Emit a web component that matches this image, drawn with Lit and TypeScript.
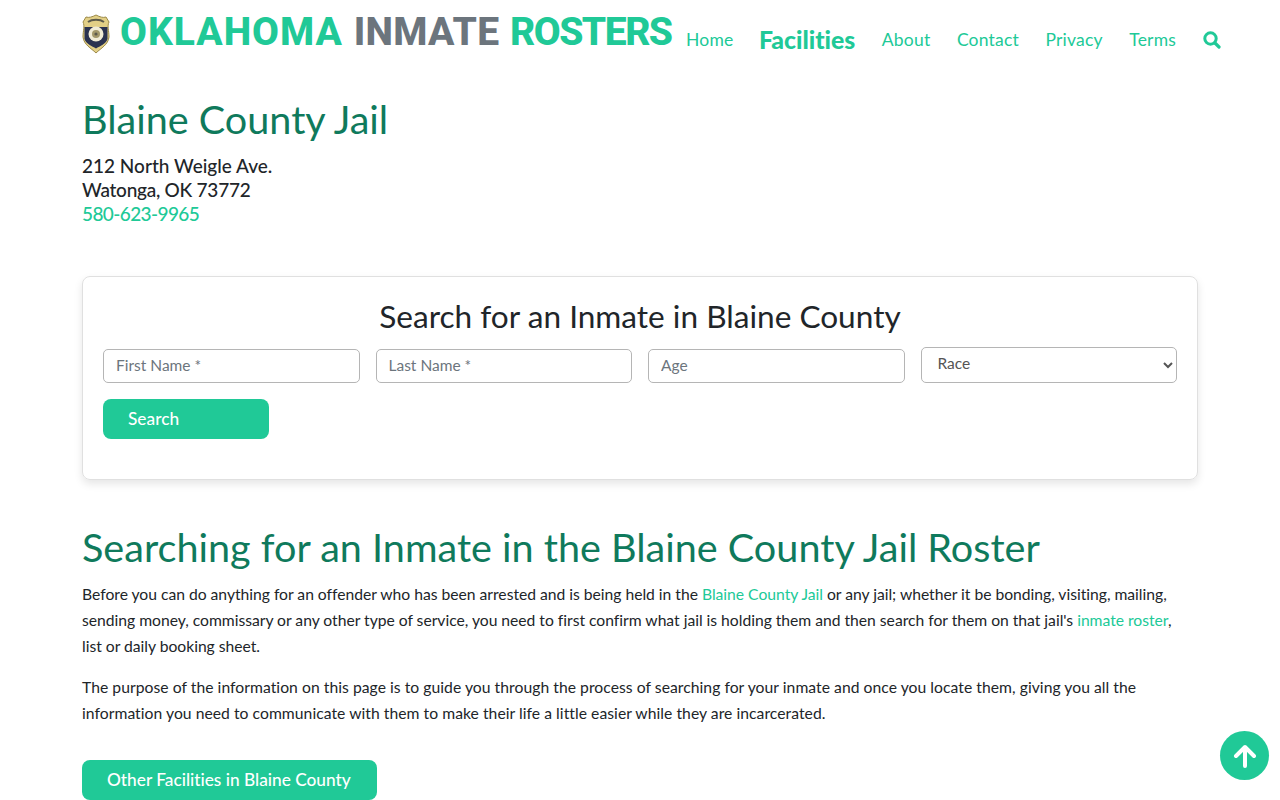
import { LitElement, html, css } from 'lit';
import { customElement } from 'lit/decorators.js';

const navLinks = ['Home', 'Facilities', 'About', 'Contact', 'Privacy', 'Terms'];

@customElement('app-root')
export class AppRoot extends LitElement {
  static styles = css`
    :host {
      display: block;
      height: 800px;
      overflow: hidden;
      background: #fff;
      color: #212529;
      font-family: 'Lato', 'Noto Sans', sans-serif;
      font-variant-ligatures: none;
      position: relative;
    }

    a {
      color: #20c997;
      text-decoration: none;
    }

    .header {
      display: flex;
      align-items: flex-start;
      height: 76px;
      padding: 0 58px 0 82px;
    }

    .brand {
      display: flex;
      align-items: center;
      width: 591px;
      height: 64px;
      flex: none;
      font-family: 'Roboto', sans-serif;
      font-size: 39px;
      font-weight: 800;
      word-spacing: 1px;
      white-space: nowrap;
    }

    .brand svg {
      margin: 4px 10px 0 0;
      flex: none;
    }

    .brand .first {
      color: #20c997;
      letter-spacing: 1px;
    }

    .brand .middle {
      color: #6c757d;
      letter-spacing: 0.3px;
    }

    .brand .last {
      color: #20c997;
      letter-spacing: -1.5px;
    }

    .nav {
      display: flex;
      align-items: center;
      height: 78px;
      margin-left: 13px;
      gap: 26.5px;
      font-size: 17.5px;
      letter-spacing: 0.2px;
    }

    .nav a.active {
      font-size: 24.8px;
      font-weight: 900;
      letter-spacing: 0;
      margin-left: -1px;
    }

    .nav svg {
      display: block;
      margin-top: 1px;
    }

    .main {
      padding: 0 82px;
    }

    h1, h2 {
      margin: 0;
      font-weight: 400;
      color: #0f7a5c;
      font-size: 39.6px;
    }

    h1 {
      line-height: 48px;
      padding-top: 19px;
    }

    .address {
      margin-top: 11px;
      font-size: 19px;
      line-height: 24px;
      font-weight: 500;
    }

    .city {
      letter-spacing: -0.25px;
    }

    .phone {
      letter-spacing: -0.6px;
    }

    .card {
      margin-top: 50px;
      height: 204px;
      box-sizing: border-box;
      border: 1px solid #e0e0e0;
      border-radius: 8px;
      box-shadow: 0 4px 8px rgba(0, 0, 0, 0.1);
      padding: 20px;
    }

    .card h3 {
      margin: 0 0 12px;
      font-size: 31.6px;
      line-height: 38px;
      font-weight: 400;
      text-align: center;
    }

    .fields {
      display: grid;
      grid-template-columns: repeat(4, 1fr);
      gap: 16px;
      align-items: end;
    }

    input, select {
      box-sizing: border-box;
      width: 100%;
      font: inherit;
      font-size: 15.5px;
      background: #fff;
      border: 1px solid #b5b5b5;
      border-radius: 5px;
      color: #555;
    }

    input {
      height: 34px;
      padding: 0 12px 3px;
    }

    input::placeholder {
      color: #6c757d;
      opacity: 1;
    }

    select {
      height: 36px;
      padding: 0 12px 5px;
    }

    .btn {
      display: inline-block;
      background: #20c997;
      color: #fff;
      border: none;
      border-radius: 8px;
      font: inherit;
      font-size: 17.3px;
      font-weight: 500;
      box-sizing: border-box;
      height: 40px;
      line-height: 39px;
      padding: 0 26px 0 25px;
    }

    .search-btn {
      display: block;
      width: 166px;
      text-align: left;
      margin-top: 16px;
      padding-bottom: 4px;
    }

    h2 {
      margin-top: 42px;
      line-height: 50px;
    }

    p {
      margin: 0 0 15px;
      max-width: 1100px;
      font-size: 15.7px;
      line-height: 26px;
      letter-spacing: 0.04px;
    }

    .intro {
      margin-top: 9px;
      letter-spacing: -0.02px;
    }

    .other {
      margin-top: 19px;
    }

    .to-top {
      position: absolute;
      left: 1220px;
      top: 731px;
      width: 49px;
      height: 49px;
      border-radius: 50%;
      background: #20c997;
      display: flex;
      align-items: center;
      justify-content: center;
    }
  `;

  private renderBadge() {
    return html`
      <svg width="28" height="40" viewBox="0 0 28 40" aria-hidden="true">
        <path d="M14 1 C18 3 21 4 24 3 L27 8 C25 12 27 17 27 23 C26 31 19 34 14 39 C9 34 2 31 1 23 C1 17 3 12 1 8 L4 3 C7 4 10 3 14 1 Z" fill="#e2cf86" stroke="#9c8a48" stroke-width="1" />
        <path d="M6 8 C10 5 18 5 22 8" fill="none" stroke="#5c5a4a" stroke-width="2" />
        <path d="M2.5 13 H25.5 V25 C24 30 18 32 14 34.5 C10 32 4 30 2.5 25 Z" fill="#2b3350" />
        <circle cx="14" cy="20" r="7.5" fill="#f1ecd6" />
        <circle cx="14" cy="20" r="4" fill="#a3986a" />
        <circle cx="14" cy="20" r="1.6" fill="#5d5a4c" />
      </svg>
    `;
  }

  private renderSearchIcon() {
    return html`
      <svg width="18" height="18" viewBox="0 0 18 18" aria-hidden="true">
        <circle cx="7.5" cy="7.5" r="5.7" fill="none" stroke="#20c997" stroke-width="3" />
        <path d="M12 12 L16 16" stroke="#20c997" stroke-width="3.2" stroke-linecap="round" />
      </svg>
    `;
  }

  render() {
    return html`
      <header class="header">
        <div class="brand">
          ${this.renderBadge()}
          <span><span class="first">OKLAHOMA</span> <span class="middle">INMATE</span> <span class="last">ROSTERS</span></span>
        </div>
        <nav class="nav">
          ${navLinks.map(
            (link) => html`<a href="#" class=${link === 'Facilities' ? 'active' : ''}>${link}</a>`
          )}
          <a href="#">${this.renderSearchIcon()}</a>
        </nav>
      </header>

      <main class="main">
        <h1>Blaine County Jail</h1>
        <div class="address">
          212 North Weigle Ave.<br />
          <span class="city">Watonga, OK 73772</span><br />
          <a class="phone" href="#">580-623-9965</a>
        </div>

        <section class="card">
          <h3>Search for an Inmate in Blaine County</h3>
          <div class="fields">
            <input placeholder="First Name *" />
            <input placeholder="Last Name *" />
            <input placeholder="Age" />
            <select><option>Race</option></select>
          </div>
          <button class="btn search-btn">Search</button>
        </section>

        <h2>Searching for an Inmate in the Blaine County Jail Roster</h2>
        <p class="intro">
          Before you can do anything for an offender who has been arrested and is being held in the
          <a href="#">Blaine County Jail</a> or any jail; whether it be bonding, visiting, mailing,
          sending money, commissary or any other type of service, you need to first confirm what jail
          is holding them and then search for them on that jail's <a href="#">inmate roster</a>,
          list or daily booking sheet.
        </p>
        <p>
          The purpose of the information on this page is to guide you through the process of searching
          for your inmate and once you locate them, giving you all the information you need to
          communicate with them to make their life a little easier while they are incarcerated.
        </p>
        <a class="btn other" href="#">Other Facilities in Blaine County</a>
      </main>

      <a class="to-top" href="#">
        <svg width="26" height="26" viewBox="0 0 26 26" aria-hidden="true">
          <path d="M13 23 V4 M4 13 L13 4 L22 13" fill="none" stroke="#fff" stroke-width="4" stroke-linecap="round" stroke-linejoin="round" />
        </svg>
      </a>
    `;
  }
}
